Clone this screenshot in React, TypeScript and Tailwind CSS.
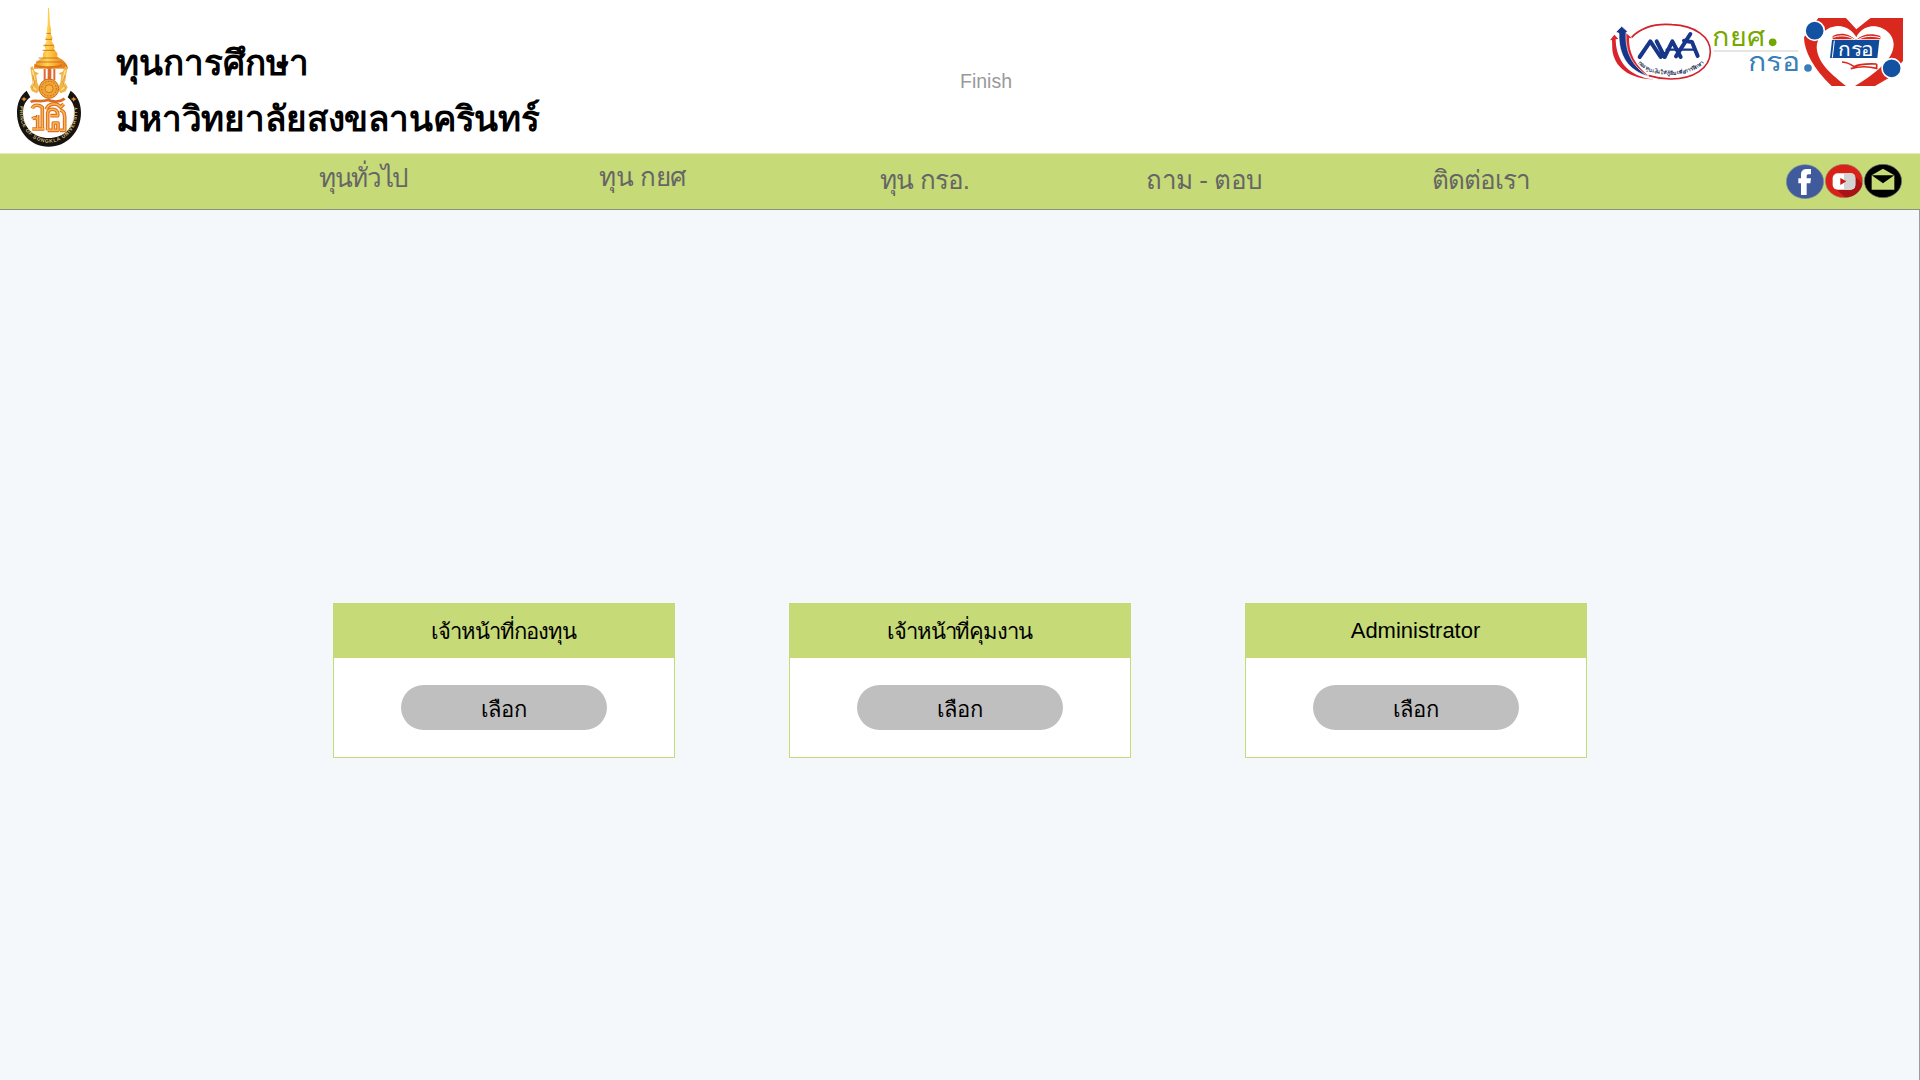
type NavEntry = { label: string; cell: string };

const navEntries: NavEntry[] = [
  { label: 'ทุนทั่วไป', cell: 'w-[280px] pt-[4px] tracking-[-1.35px]' },
  { label: 'ทุน กยศ', cell: 'w-[281px] pt-[3px] tracking-[-0.4px]' },
  { label: 'ทุน กรอ.', cell: 'w-[266px] pt-[6px] tracking-[-0.9px]' },
  { label: 'ถาม - ตอบ', cell: 'w-[286px] pt-[6px] tracking-[-0.5px]' },
  { label: 'ติดต่อเรา', cell: 'w-[200px] pt-[6px] tracking-[-1px]' },
];

const roles = [
  { name: 'เจ้าหน้าที่กองทุน', size: 'text-[22px] tracking-[-1px] pt-px' },
  { name: 'เจ้าหน้าที่คุมงาน', size: 'text-[22px] tracking-[-1.1px] pt-px' },
  { name: 'Administrator', size: 'text-[22px] pb-px' },
];

function Crest() {
  return (
    <svg viewBox="0 0 360 459" className="h-[153px] w-[120px] shrink-0">
      <defs>
        <linearGradient id="gold" x1="0" x2="1">
          <stop offset="0" stopColor="#e98a1c" />
          <stop offset=".4" stopColor="#ffd552" />
          <stop offset=".65" stopColor="#f7a92c" />
          <stop offset="1" stopColor="#d96f16" />
        </linearGradient>
        <path id="ringText" d="M61 318 C50 372 88 428 146 428 C204 428 242 372 230 312" />
      </defs>
      <path d="M144 24h3l3 50 4 16-2 10 6 14-3 10 9 16-2 8 10 12v12c22 8 30 22 32 34H101c2-14 11-26 28-33v-13l8-12-4-9 7-15-3-10 5-14-2-10 3-16z" fill="url(#gold)" />
      <path d="M139 100h14M136 118h20M130 136h32M128 151h36M108 186h76M116 174h60" stroke="#c8651a" strokeWidth="2.5" />
      <path d="M103 191c6 9 76 11 84-1v8c-8 11-78 10-84 0z" fill="#dc761c" />
      <path d="M143 205h11v38h-11zM131 207h6v34h-6zM160 207h6v34h-6z" fill="#de6a30" />
      <path d="M91 203l6-5 8 17 12 5-8 6 3 22 8 20-9 12-15-6-6-13 8-13zM202 203l-6-5-8 17-12 5 8 6-3 22-8 20 9 12 15-6 6-13-8-13z" fill="#f2b445" />
      <path d="M97 210l7 28-6 22 11 10M196 210l-7 28 6 22-11 10" fill="none" stroke="#fbe6a0" strokeWidth="4" />
      <path d="M99 226l5 20-7 18M194 226l-5 20 7 18" fill="none" stroke="#d07a20" strokeWidth="2" />
      <path d="M80 272C60 286 51 311 51 338c0 58 41 102 95 102s97-44 97-102c0-27-10-52-31-66l-9 20c14 11 21 27 21 46 0 45-34 76-78 76s-77-31-77-76c0-19 7-36 22-46z" fill="#17130e" />
      <path d="M72 290l3 5 6 2-6 3-3 5-3-5-6-3 6-2zM221 290l3 5 6 2-6 3-3 5-3-5-6-3 6-2z" fill="#df8c32" />
      <text fill="#d9bd79" fontFamily="Liberation Sans" fontWeight="bold" fontSize="15">
        <textPath href="#ringText" textLength="314">PRINCE OF SONGKLA UNIVERSITY</textPath>
      </text>
      <circle cx="147" cy="266" r="29" fill="#eea535" stroke="#cd6a1c" strokeWidth="3" />
      <circle cx="147" cy="266" r="22" fill="none" stroke="#c05a17" strokeWidth="2.500" strokeDasharray="5 4" />
      <circle cx="147" cy="266" r="12" fill="#f6b740" stroke="#c95a16" strokeWidth="2" />
      <g fill="none" strokeLinejoin="round" stroke="#dc6c22" strokeWidth="11">
        <path d="M97 325c4-12 22-12 30-2v64M97 357c6-6 14-4 16 3v27M97 387h36M113 345v18M143 391v-52c2-15 26-15 30 0v8h-22M139 328c6-18 32-22 43-6l9-10M160 391v-22h14v22h-31M180 330c10 2 14 10 14 20v41h-14" />
        <path d="M92 306c12-8 28 2 52-6 16 6 34 8 50-4" strokeWidth="8" />
      </g>
      <g fill="none" strokeLinejoin="round" stroke="#fbb950" strokeWidth="4.500">
        <path d="M97 325c4-12 22-12 30-2v64M97 357c6-6 14-4 16 3v27M97 387h36M113 345v18M143 391v-52c2-15 26-15 30 0v8h-22M139 328c6-18 32-22 43-6l9-10M160 391v-22h14v22h-31M180 330c10 2 14 10 14 20v41h-14" />
      </g>
    </svg>
  );
}

function FundLogos() {
  return (
    <svg viewBox="0 0 960 330" className="h-[110px] w-[320px] shrink-0">
      <defs>
        <path id="fundArc" d="M114 190 C150 236 272 236 310 188" />
      </defs>
      <path d="M95 112C128 78 176 71 216 74c70 3 116 37 115 82-1 49-51 81-118 81-24 0-47-4-67-10" fill="none" stroke="#d3222c" strokeWidth="5" />
      <path d="M30 121l13-17 12 13-8 1c1 50 23 97 86 115 15 4 31 6 49 5-72 5-133-22-144-81-2-13-1-25-2-37z" fill="#d9242c" />
      <path d="M77 98l19 17-9-1c-1 45 18 82 62 116-52-21-78-65-76-120z" fill="#dc2730" />
      <path d="M65 79l17 15-4 4c-2 55 14 98 69 132-63-18-92-64-90-130l-9-4z" fill="#17368a" stroke="#fff" strokeWidth="2" />
      <g fill="none" stroke="#17368a" strokeWidth="12" strokeLinecap="round" strokeLinejoin="round">
        <path d="M119 171L151 124L182 171M170 124L194 171L217 124L242 171" />
        <path d="M228 169L271 102M252 122L276 126L293 168" />
        <path d="M200 149H284" strokeWidth="7" />
      </g>
      <text fill="#293455" fontFamily="Liberation Sans, sans-serif" fontSize="16" fontWeight="bold">
        <textPath href="#fundArc" textLength="216">กองทุนเงินให้กู้ยืมเพื่อการศึกษา</textPath>
      </text>
      <text x="337" y="137" fill="#76a800" fontFamily="Liberation Sans, sans-serif" fontSize="80" textLength="158" lengthAdjust="spacingAndGlyphs">กยศ</text>
      <circle cx="518" cy="127" r="11.500" fill="#70a700" />
      <path d="M341 153h254" stroke="#dedede" strokeWidth="5" />
      <text x="444" y="213" fill="#397fba" fontFamily="Liberation Sans, sans-serif" fontSize="80" textLength="156" lengthAdjust="spacingAndGlyphs">กรอ</text>
      <g transform="translate(600 42)">
        <path d="M55 12H138C150 20 162 30 169 44C180 30 195 18 212 12H309V140L270 190L225 216H95C40 165 12 110 12 70Z" fill="#d9291e" />
        <path d="M136 10L169 46L214 10Z" fill="#fff" />
        <path d="M165 216C215 185 282 140 281 90C280 50 230 25 196 42C180 50 172 62 169 70C160 50 130 30 100 38C75 42 50 70 50 100C52 150 100 185 138 216Z" fill="#fff" />
        <path d="M98 66C125 52 150 62 168 78C186 60 214 56 241 66V76H98Z" fill="#d9291e" />
        <path d="M100 70C126 61 150 67 166 79M170 79C190 66 215 64 240 71" stroke="#fff" strokeWidth="3" fill="none" />
        <path d="M96 78H238L232 132H90Z" fill="#104b9b" />
        <path d="M103 80L97 131" stroke="#fff" strokeWidth="3" />
        <path d="M126 144C142 145 152 150 162 158C182 148 206 149 230 150M152 164C180 156 206 157 230 163V150" fill="none" stroke="#d9291e" strokeWidth="5" />
        <text x="113" y="126" fill="#fff" fontFamily="Liberation Sans, sans-serif" fontSize="58" textLength="110" lengthAdjust="spacingAndGlyphs">กรอ</text>
        <circle cx="44" cy="50" r="29" fill="#1352a3" stroke="#fff" strokeWidth="5" />
        <circle cx="275" cy="163" r="29" fill="#1352a3" stroke="#fff" strokeWidth="5" />
        <circle cx="24" cy="162" r="11.500" fill="#397fba" />
      </g>
    </svg>
  );
}

function SocialIcons() {
  return (
    <svg viewBox="0 0 351 105" className="h-[35px] w-[117px] shrink-0">
      <ellipse cx="57" cy="53" rx="56" ry="51" fill="#405b9b" stroke="#8390a0" strokeWidth="2" />
      <path d="M45 93V58H37V43h8V33c0-15 8-18 19-18h11v16h-7c-6 0-6 3-6 7v5h13l-2 15H62v35z" fill="#fff" />
      <ellipse cx="174" cy="51" rx="56" ry="50" fill="#d82218" stroke="#9b8a87" strokeWidth="2" />
      <path d="M207 37l22 22c-4 22-24 40-51 41l-32-28z" fill="#a81313" />
      <rect x="140" y="28" width="68" height="49" rx="15" fill="#fff" />
      <path d="M174 28h20c10 0 14 6 14 14v21c0 9-4 14-14 14h-20z" fill="#d3d3d3" />
      <path d="M163 42l18 10-18 11z" fill="#c81818" />
      <ellipse cx="291" cy="51" rx="56" ry="50" fill="#000" stroke="#777a80" strokeWidth="2" />
      <path d="M257 34l34-20 34 20v43h-68z" fill="#c6da77" />
      <path d="M257 34h68l-34 24z" fill="#000" />
      <path d="M264 32h54l-27-14z" fill="#c6da77" />
    </svg>
  );
}

export default function App() {
  return (
    <div className="flex h-[1080px] w-[1920px] flex-col overflow-hidden bg-[#f4f8fb] font-['Liberation_Sans',sans-serif] text-black">
      <header className="flex h-[153px] items-start bg-white">
        <div className="flex w-[960px]">
          <Crest />
          <h1 className="-ml-[4px] pt-[35px] text-[35px] leading-[56px] font-bold whitespace-nowrap">
            ทุนการศึกษา
            <br />
            <span className="tracking-[-0.15px]">มหาวิทยาลัยสงขลานครินทร์</span>
          </h1>
        </div>
        <p className="w-[640px] pt-[69px] text-[19.500px] leading-6 text-[#999]">Finish</p>
        <FundLogos />
      </header>
      <nav className="flex h-[57px] shrink-0 border-t border-b border-t-[#e3edbc] border-b-[#899577] bg-[#c6da77] pl-[319px] text-[26px] text-[#666]">
        {navEntries.map((entry) => (
          <a key={entry.label} className={`${entry.cell} shrink-0 leading-[40px] whitespace-nowrap`}>
            {entry.label}
          </a>
        ))}
        <div className="ml-[154px] pt-[10px]">
          <SocialIcons />
        </div>
      </nav>
      <main className="flex grow justify-center gap-[114px] border-r border-[#9a9da0] pt-[393px]">
        {roles.map((role) => (
          <section key={role.name} className="flex h-[155px] w-[342px] flex-col border border-[#c6da77] bg-white">
            <h2 className={`${role.size} flex h-[54px] items-center justify-center bg-[#c6da77]`}>{role.name}</h2>
            <div className="flex grow items-center justify-center">
              <button className="h-[45px] w-[206px] rounded-full bg-[#bfbfbf] pt-[4px] text-[22px] tracking-[-0.400px]">เลือก</button>
            </div>
          </section>
        ))}
      </main>
    </div>
  );
}
